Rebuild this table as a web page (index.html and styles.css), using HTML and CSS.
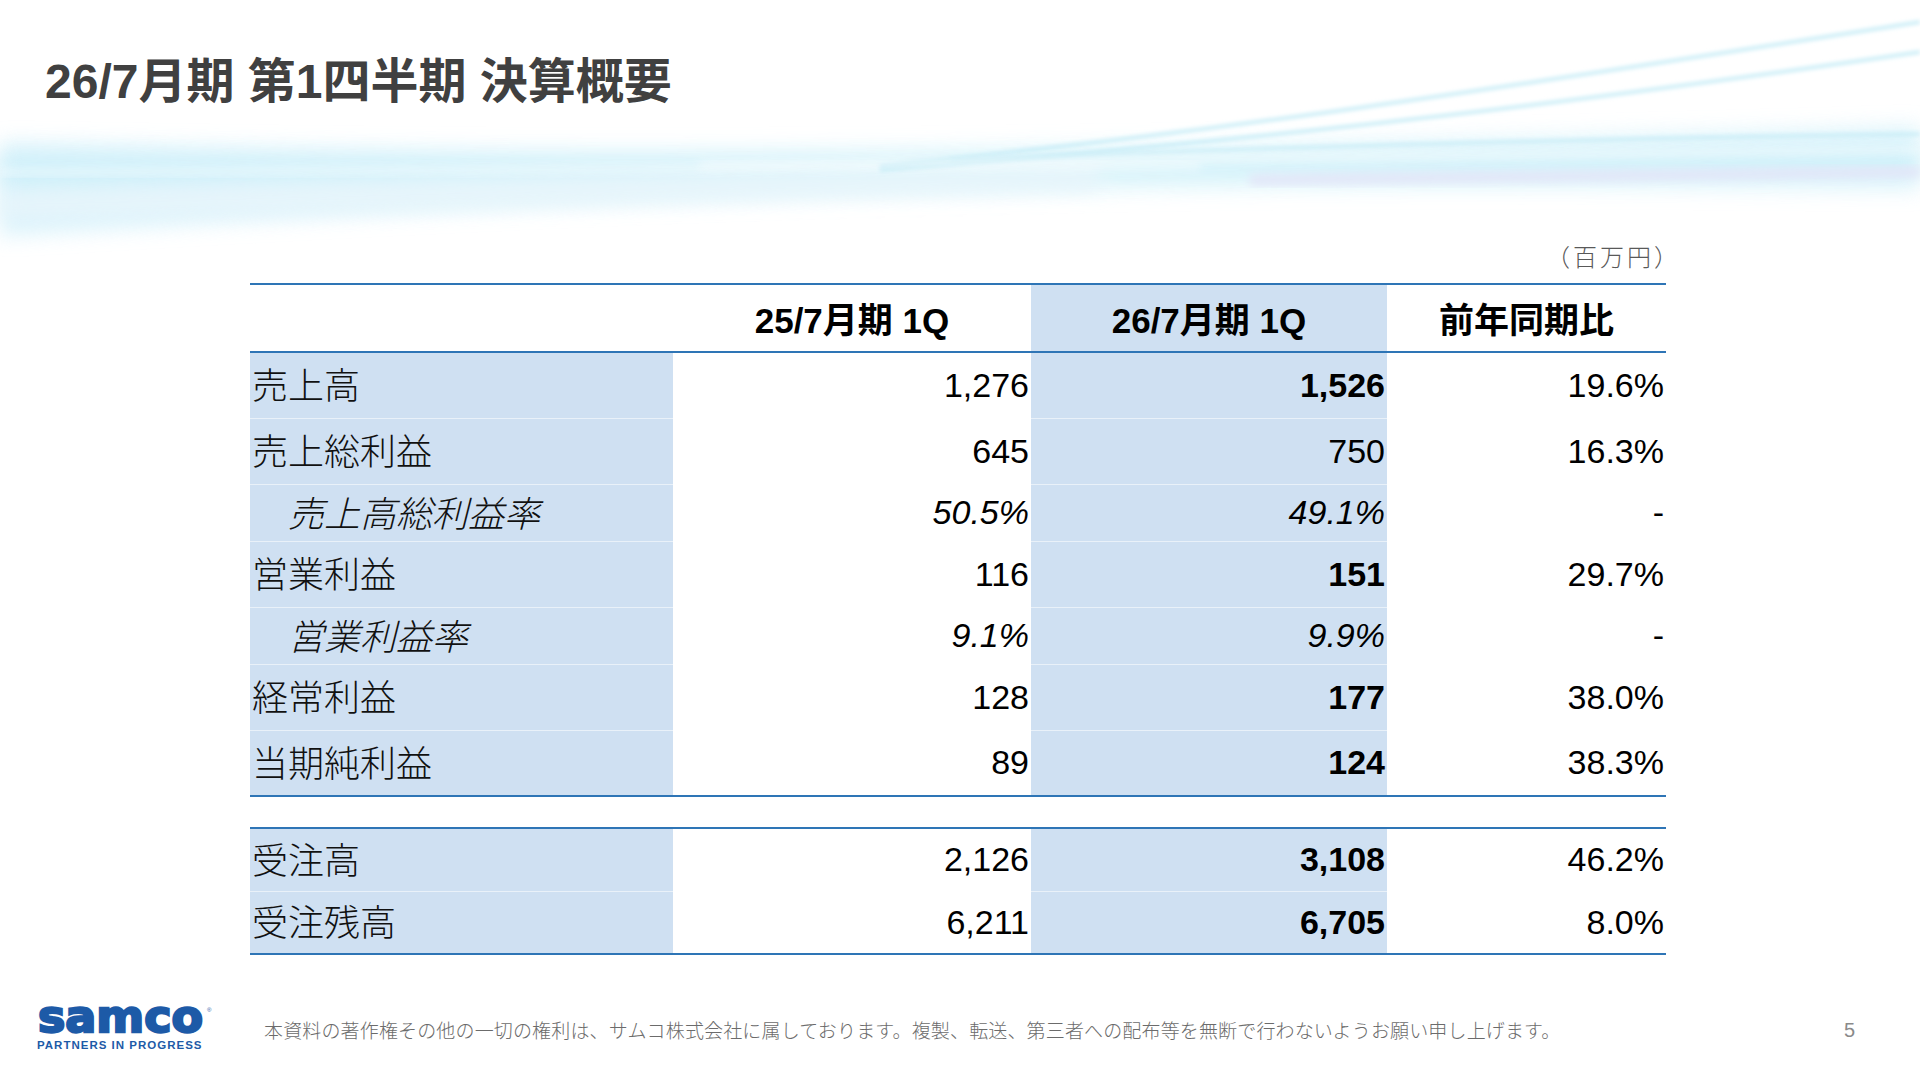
FILE: index.html
```html
<!DOCTYPE html>
<html lang="ja">
<head>
<meta charset="utf-8">
<title>26/7月期 第1四半期 決算概要</title>
<link rel="stylesheet" href="styles.css">
</head>
<body>
<div class="slide">
  <svg class="swoosh" width="1920" height="300" viewBox="0 0 1920 300" aria-hidden="true">
    <defs>
      <filter id="b10" x="-10%" y="-100%" width="120%" height="300%"><feGaussianBlur stdDeviation="10"/></filter>
      <filter id="b5" x="-10%" y="-100%" width="120%" height="300%"><feGaussianBlur stdDeviation="5"/></filter>
      <filter id="b2" x="-10%" y="-100%" width="120%" height="300%"><feGaussianBlur stdDeviation="2"/></filter>
      <linearGradient id="bandH" x1="0" x2="1" y1="0" y2="0">
        <stop offset="0" stop-color="#cdeefa"/>
        <stop offset="0.55" stop-color="#dcf5fb"/>
        <stop offset="1" stop-color="#d0f0fa"/>
      </linearGradient>
    </defs>
    <path d="M0,142 C400,150 900,158 1920,126 L1920,190 C1400,186 900,180 0,236 Z" fill="url(#bandH)" filter="url(#b10)" opacity="0.7"/>
    <path d="M0,156 C500,162 1000,166 1920,146 L1920,170 C1000,178 500,180 0,188 Z" fill="#caeff9" filter="url(#b10)" opacity="0.75"/>
    <path d="M0,205 C300,198 700,186 1100,178" stroke="#e8f5fb" stroke-width="22" fill="none" filter="url(#b10)"/>
    <path d="M0,172 C400,172 800,170 1200,166" stroke="#ffffff" stroke-width="6" fill="none" filter="url(#b5)" opacity="0.6"/>
    <path d="M1250,180 C1550,176 1750,174 1920,172" stroke="#e3e5f8" stroke-width="10" fill="none" filter="url(#b5)"/>
    <path d="M880,166 C1250,130 1600,72 1920,22" stroke="#bde9f5" stroke-width="3" fill="none" filter="url(#b2)"/>
    <path d="M880,170 C1300,138 1620,96 1920,52" stroke="#bde9f5" stroke-width="3" fill="none" filter="url(#b2)"/>
    <path d="M950,160 C1300,146 1620,138 1920,134" stroke="#c4ebf6" stroke-width="3" fill="none" filter="url(#b2)"/>
    <path d="M700,165 C1100,162 1500,158 1920,150" stroke="#ffffff" stroke-width="5" fill="none" filter="url(#b5)" opacity="0.7"/>
  </svg>

  <header class="slide-header">
    <h1 class="title">26/7月期 第1四半期 決算概要</h1>
  </header>

  <main class="content">
    <div class="unit">（百万円）</div>
    <table class="fin">
      <colgroup>
        <col class="c-label"><col class="c-prev"><col class="c-cur"><col class="c-yoy">
      </colgroup>
      <thead>
        <tr class="head">
          <th class="lab"></th>
          <th>25/7月期 1Q</th>
          <th class="cur">26/7月期 1Q</th>
          <th>前年同期比</th>
        </tr>
      </thead>
      <tbody>
        <tr class="main">
          <td class="lab">売上高</td><td class="num">1,276</td><td class="num cur b">1,526</td><td class="num">19.6%</td>
        </tr>
        <tr class="main">
          <td class="lab">売上総利益</td><td class="num">645</td><td class="num cur">750</td><td class="num">16.3%</td>
        </tr>
        <tr class="sub">
          <td class="lab ind">売上高総利益率</td><td class="num">50.5%</td><td class="num cur">49.1%</td><td class="num dash">-</td>
        </tr>
        <tr class="main">
          <td class="lab">営業利益</td><td class="num">116</td><td class="num cur b">151</td><td class="num">29.7%</td>
        </tr>
        <tr class="sub">
          <td class="lab ind">営業利益率</td><td class="num">9.1%</td><td class="num cur">9.9%</td><td class="num dash">-</td>
        </tr>
        <tr class="main">
          <td class="lab">経常利益</td><td class="num">128</td><td class="num cur b">177</td><td class="num">38.0%</td>
        </tr>
        <tr class="main last">
          <td class="lab">当期純利益</td><td class="num">89</td><td class="num cur b">124</td><td class="num">38.3%</td>
        </tr>
      </tbody>
    </table>

    <table class="fin fin2">
      <colgroup>
        <col class="c-label"><col class="c-prev"><col class="c-cur"><col class="c-yoy">
      </colgroup>
      <tbody>
        <tr class="ord">
          <td class="lab">受注高</td><td class="num">2,126</td><td class="num cur b">3,108</td><td class="num">46.2%</td>
        </tr>
        <tr class="ord last">
          <td class="lab">受注残高</td><td class="num">6,211</td><td class="num cur b">6,705</td><td class="num">8.0%</td>
        </tr>
      </tbody>
    </table>
  </main>

  <footer class="slide-footer">
    <div class="logo">
      <svg class="logo-mark" width="176" height="40" viewBox="0 0 176 40" aria-label="samco">
        <text x="1" y="35" textLength="165" lengthAdjust="spacingAndGlyphs" class="logo-word">samco</text>
        <text x="170" y="15" class="logo-reg">®</text>
      </svg>
      <div class="tagline">PARTNERS IN PROGRESS</div>
    </div>
    <p class="notice">本資料の著作権その他の一切の権利は、サムコ株式会社に属しております。複製、転送、第三者への配布等を無断で行わないようお願い申し上げます。</p>
    <div class="page-no">5</div>
  </footer>
</div>
</body>
</html>
```

FILE: styles.css
```css
html, body {
  margin: 0;
  padding: 0;
  background: #ffffff;
}

.slide {
  position: relative;
  width: 1920px;
  height: 1080px;
  overflow: hidden;
  display: flex;
  flex-direction: column;
  font-family: "Liberation Sans", "Noto Sans CJK JP", sans-serif;
  color: #000;
}

.swoosh {
  position: absolute;
  top: 0;
  left: 0;
  z-index: 0;
}

.slide-header,
.content,
.slide-footer {
  position: relative;
  z-index: 1;
}

.slide-header {
  padding: 54px 0 0 45px;
}

.title {
  margin: 0;
  font-size: 48px;
  line-height: 56px;
  font-weight: 700;
  color: #404040;
}

.content {
  margin: 0 0 0 250px;
  width: 1416px;
  display: flex;
  flex-direction: column;
}

.unit {
  margin-top: 131px;
  margin-right: -15px;
  text-align: right;
  font-family: "Noto Sans CJK JP", sans-serif;
  font-weight: 300;
  font-size: 24px;
  line-height: 30px;
  letter-spacing: 3px;
  color: #595959;
}

.fin {
  width: 1416px;
  table-layout: fixed;
  border-collapse: collapse;
  border-top: 2px solid #2e75b6;
  border-bottom: 2px solid #2e75b6;
  margin-top: 12px;
}

.fin2 {
  margin-top: 30px;
}

.c-label { width: 423px; }
.c-prev { width: 358px; }
.c-cur { width: 356px; }
.c-yoy { width: 279px; }

.fin th,
.fin td {
  padding: 0;
  white-space: nowrap;
  vertical-align: middle;
}

.fin tr.head { height: 68px; }
.fin tr.main { height: 66px; }
.fin tr.sub { height: 54px; }
.fin tr.ord { height: 63px; }

.fin .head th {
  border-bottom: 2px solid #2e75b6;
  font-family: "Liberation Sans", "Noto Sans CJK JP", sans-serif;
  font-weight: 700;
  font-size: 35px;
  text-align: center;
  padding-bottom: 2px;
}

.fin .cur { background: #cfe0f2; }

.fin td.lab {
  background: #cfe0f2;
  font-family: "Noto Sans CJK JP", sans-serif;
  font-weight: 300;
  font-size: 36px;
  text-align: left;
  padding-left: 2px;
  padding-bottom: 4px;
  color: #111;
}

.fin th.lab { background: transparent; }

.fin td.ind {
  padding-left: 38px;
  font-style: italic;
}

.fin td.num {
  font-family: "Liberation Sans", sans-serif;
  font-size: 34px;
  text-align: right;
  padding-right: 2px;
}

.fin td.b { font-weight: 700; }

.fin .sub td.num { font-style: italic; }
.fin .sub td.dash { font-style: normal; }

.fin tbody td {
  border-bottom: 1px solid rgba(255, 255, 255, 0.55);
}

.fin tr.last td { border-bottom: none; }

.slide-footer {
  margin-top: auto;
  height: 96px;
  display: flex;
  align-items: center;
  padding-bottom: 2px;
}

.logo {
  width: 219px;
  padding-left: 37px;
  box-sizing: border-box;
  display: flex;
  flex-direction: column;
  margin-top: -12px;
}

.logo-mark {
  display: block;
  overflow: visible;
}

.logo-word {
  font-family: "DejaVu Sans", "Liberation Sans", sans-serif;
  font-weight: 700;
  font-size: 44px;
  fill: #1d5aa7;
  stroke: #1d5aa7;
  stroke-width: 2.4px;
}

.logo-reg {
  font-family: "Liberation Sans", sans-serif;
  font-size: 6px;
  fill: #1d5aa7;
}

.tagline {
  margin-top: 2px;
  font-family: "Liberation Sans", sans-serif;
  font-weight: 700;
  font-size: 11.5px;
  line-height: 12px;
  letter-spacing: 1px;
  color: #1d5aa7;
  white-space: nowrap;
}

.notice {
  margin: 0 0 0 45px;
  font-family: "Noto Sans CJK JP", sans-serif;
  font-weight: 300;
  font-size: 19px;
  line-height: 26px;
  color: #6b6b6b;
  white-space: nowrap;
  letter-spacing: 0.15px;
}

.page-no {
  margin-left: auto;
  margin-right: 65px;
  font-family: "Liberation Sans", sans-serif;
  font-size: 20px;
  color: #8a8a8a;
}
```
